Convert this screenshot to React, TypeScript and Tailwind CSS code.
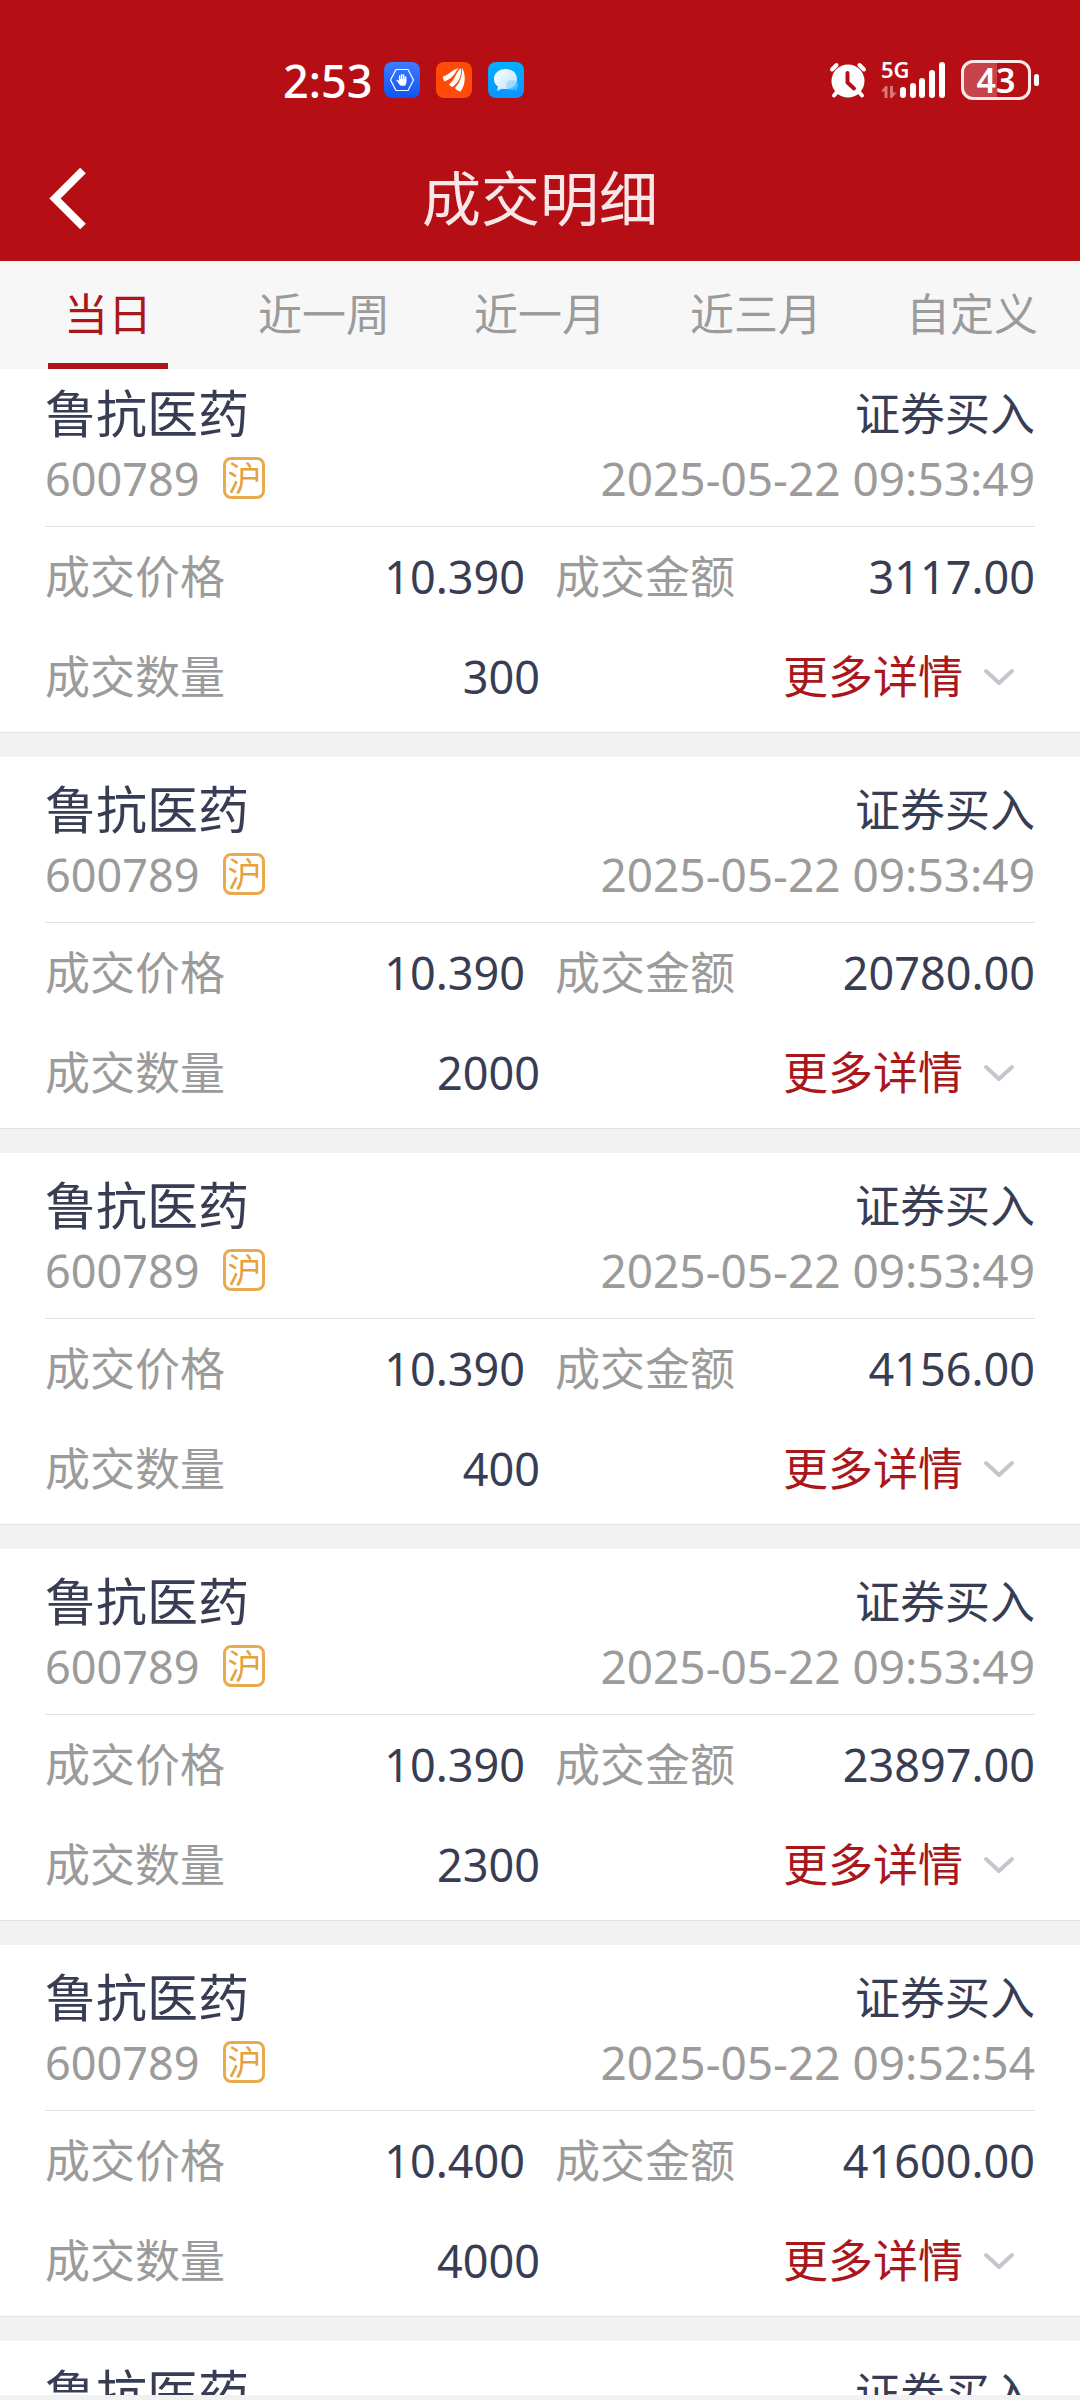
import { useState } from 'react';

interface DealDetail {
  code: string;
  market: string;
  time: string;
  price: string;
  amount: string;
  quantity: string;
}

interface Deal {
  id: number;
  name: string;
  side: string;
  detail?: DealDetail;
}

const stock = { name: '鲁抗医药', side: '证券买入' };
const listing = { code: '600789', market: '沪' };

const deals: Deal[] = [
  { ...stock, id: 1, detail: { ...listing, time: '2025-05-22 09:53:49', price: '10.390', amount: '3117.00', quantity: '300' } },
  { ...stock, id: 2, detail: { ...listing, time: '2025-05-22 09:53:49', price: '10.390', amount: '20780.00', quantity: '2000' } },
  { ...stock, id: 3, detail: { ...listing, time: '2025-05-22 09:53:49', price: '10.390', amount: '4156.00', quantity: '400' } },
  { ...stock, id: 4, detail: { ...listing, time: '2025-05-22 09:53:49', price: '10.390', amount: '23897.00', quantity: '2300' } },
  { ...stock, id: 5, detail: { ...listing, time: '2025-05-22 09:52:54', price: '10.400', amount: '41600.00', quantity: '4000' } },
  { ...stock, id: 6 },
];

const tabs = ['当日', '近一周', '近一月', '近三月', '自定义'];

function HandIcon() {
  return (
    <svg viewBox="0 0 36 36" className="size-9" aria-hidden="true">
      <defs>
        <linearGradient id="hand-bg" x1="0" y1="0" x2="0" y2="1">
          <stop offset="0" stopColor="#3f7bff" />
          <stop offset="1" stopColor="#0d55f5" />
        </linearGradient>
      </defs>
      <rect width="36" height="36" rx="8" fill="url(#hand-bg)" />
      <path d="M12 7.5h12L29.500 18 24 28.500H12L6.500 18z" fill="none" stroke="#fff" strokeWidth="1.200" strokeLinejoin="round" />
      <path
        d="M15.700 18.500v-4.500M17.700 18v-5.500M19.700 18v-5M21.600 19v-4M13.200 18.500l2.500 2.500"
        stroke="#fff"
        strokeWidth="1.500"
        strokeLinecap="round"
      />
      <path d="M15 17h7.300v3.500c0 1.500-.8 2.500-1.500 3.300h-4c-1-.8-2-1.800-2.500-2.800z" fill="#fff" />
    </svg>
  );
}

function WingIcon() {
  return (
    <svg viewBox="0 0 36 36" className="size-9" aria-hidden="true">
      <rect width="36" height="36" rx="8" fill="#ff4a08" />
      <path d="M7 14.500C13 13 16 7.500 23 6c-4 3-3.500 9-14.500 13.500C7.500 18 7 16.500 7 14.500z" fill="#fff" />
      <path d="M13 22.500C19 18 20.500 9 25 6c1 7-2 14-8.500 19-1.500-.5-2.800-1.300-3.500-2.500z" fill="#fff" />
      <path d="M19 26c4.500-5 7.500-11.500 7-20 4 6 3.800 17-1.500 23.500-2.500-.5-4.500-1.500-5.500-3.500z" fill="#fff" />
    </svg>
  );
}

function ChatIcon() {
  return (
    <svg viewBox="0 0 36 36" className="size-9" aria-hidden="true">
      <defs>
        <linearGradient id="chat-bg" x1="0" y1="0" x2="0" y2="1">
          <stop offset="0" stopColor="#04b0ff" />
          <stop offset="1" stopColor="#0a94ff" />
        </linearGradient>
        <linearGradient id="chat-bubble" x1="0" y1="0" x2="1" y2="1">
          <stop offset="0" stopColor="#fff" />
          <stop offset="1" stopColor="#b5e2ff" />
        </linearGradient>
      </defs>
      <rect width="36" height="36" rx="8" fill="url(#chat-bg)" />
      <path
        d="M17.500 7C10.500 7 6 11.500 6 17c0 3.500 1.500 6 4 7.500L9 29l5-2.300c1 .3 2.300.4 3.500.4C24 27.100 29 23 29 17S24.500 7 17.500 7z"
        fill="url(#chat-bubble)"
      />
      <path
        d="M24 18c-3.500 0-6 2-6 5s2.500 5 6 5l2.500-.5L29 29l-.5-2.500c1-.8 1.500-2 1.500-3.500 0-3-2.500-5-6-5z"
        fill="#7fd0ff"
        opacity=".6"
      />
    </svg>
  );
}

function AlarmIcon() {
  return (
    <svg viewBox="0 0 38 38" className="size-[38px]" aria-hidden="true">
      <g stroke="#fff" strokeLinecap="round" strokeWidth="4">
        <path d="M3 8.500 7.500 4M35 8.500 30.500 4M8 31l-3 3.500M30 31l3 3.500" />
      </g>
      <circle cx="19" cy="20" r="16.500" fill="#fff" />
      <path d="M18.500 12v9.500l6.500 6" fill="none" stroke="#b50f15" strokeWidth="4" strokeLinecap="round" strokeLinejoin="round" />
    </svg>
  );
}

function SignalIcon() {
  return (
    <svg viewBox="0 0 66 38" className="h-[38px] w-[66px]" aria-hidden="true">
      <g fill="#fff">
        <rect x="19" y="26" width="6" height="11" rx="3" />
        <rect x="29" y="22" width="6" height="15" rx="3" />
        <rect x="38" y="17" width="6" height="20" rx="3" />
        <rect x="48" y="9" width="6" height="28" rx="3" />
        <rect x="58" y="1" width="6" height="36" rx="3" />
      </g>
      <path d="M0 30.500 4.500 25h2v12h-3v-6.500zM9 25h3v6.500h3.500L11 37H9z" fill="#d9777b" />
    </svg>
  );
}

function Battery() {
  return (
    <div className="flex items-center gap-[3px]">
      <div className="flex h-10 w-[70px] items-center justify-center rounded-xl border-3 border-[#fbe9ea] bg-linear-to-r from-[#c6434b] from-52% to-[#b50f15] to-52% text-[34px] leading-none font-semibold">
        43
      </div>
      <div className="h-3 w-[5px] rounded-full bg-white" />
    </div>
  );
}

function StatusBar() {
  return (
    <div className="flex h-[136px] items-center justify-between pt-6 pr-[41px] pl-[283px]">
      <div className="flex items-center gap-4">
        <span className="-mr-1 text-[45px] leading-none font-medium">2:53</span>
        <HandIcon />
        <WingIcon />
        <ChatIcon />
      </div>
      <div className="flex items-center">
        <AlarmIcon />
        <div className="relative ml-[14px]">
          <SignalIcon />
          <span className="absolute -top-[6px] left-0 text-[22px] leading-7 font-semibold">5G</span>
        </div>
        <div className="ml-[14px]">
          <Battery />
        </div>
      </div>
    </div>
  );
}

function DealCard({ deal }: { deal: Deal }) {
  const { name, side, detail } = deal;

  return (
    <article className="border-b border-[#e2e2e2] bg-white px-[45px] pb-[5px]">
      <header className="pt-6">
        <div className="flex h-14 items-center justify-between">
          <h2 className="text-[51px] leading-none">{name}</h2>
          <span className="text-[45px] leading-none">{side}</span>
        </div>
        {detail && (
          <div className="flex h-[74px] items-center justify-between leading-none text-[#9b9b9b]">
            <div className="flex items-center gap-6 text-[45px]">
              <span>{detail.code}</span>
              <span className="flex size-[42px] items-center justify-center rounded-lg border-3 border-[#e8a94f] text-[34px] text-[#e6a03c]">
                {detail.market}
              </span>
            </div>
            <time className="text-[46px]">{detail.time}</time>
          </div>
        )}
      </header>
      {detail && (
        <>
          <dl className="mt-[11px] grid h-[100px] grid-cols-2 items-center gap-[30px] border-t border-[#e2e2e2] text-[45px] leading-none">
            <div className="flex justify-between">
              <dt className="text-[#9b9b9b]">成交价格</dt>
              <dd>{detail.price}</dd>
            </div>
            <div className="flex justify-between">
              <dt className="text-[#9b9b9b]">成交金额</dt>
              <dd>{detail.amount}</dd>
            </div>
          </dl>
          <div className="grid h-[101px] grid-cols-2 items-center text-[45px] leading-none">
            <dl className="flex justify-between">
              <dt className="text-[#9b9b9b]">成交数量</dt>
              <dd>{detail.quantity}</dd>
            </dl>
            <button type="button" className="flex items-center justify-end gap-5 pr-5 text-[#a9171b]">
              更多详情
              <svg viewBox="0 0 32 18" className="h-[18px] w-8" fill="none" aria-hidden="true">
                <path d="M3 3l13 12L29 3" stroke="#c5c6cc" strokeWidth="4" strokeLinecap="round" strokeLinejoin="round" />
              </svg>
            </button>
          </div>
        </>
      )}
    </article>
  );
}

export default function App() {
  const [active, setActive] = useState(0);

  return (
    <div className="flex h-screen flex-col overflow-hidden bg-[#f1f1f1] pb-[5px] font-['Noto_Sans','Noto_Sans_CJK_SC',sans-serif] text-[#383d54]">
      <div className="shrink-0 bg-[#b50f15] text-white">
        <StatusBar />
        <div className="grid h-[125px] grid-cols-[1fr_auto_1fr] items-center px-12">
          <button type="button" aria-label="返回" className="justify-self-start">
            <svg viewBox="0 0 40 64" className="h-16 w-10" fill="none" aria-hidden="true">
              <path d="M35 3.500L7 31.500l28 28" stroke="#fff" strokeWidth="8" />
            </svg>
          </button>
          <h1 className="text-[59px] leading-none text-[#f8e7e8]">成交明细</h1>
        </div>
      </div>

      <div role="tablist" className="relative z-10 grid h-[108px] shrink-0 grid-cols-5 bg-[#f7f7f7]">
        {tabs.map((tab, i) => (
          <button
            key={tab}
            type="button"
            role="tab"
            aria-selected={i === active}
            onClick={() => setActive(i)}
            className={`flex flex-col items-center justify-between text-[44px] leading-none ${
              i === active ? 'text-[#a9171b]' : 'text-[#9b9b9b]'
            }`}
          >
            <span className="flex flex-1 items-center pt-1">{tab}</span>
            <span className={`h-1.5 w-[120px] ${i === active ? 'bg-[#b0141a]' : ''}`} />
          </button>
        ))}
      </div>

      {/* the list is scrolled a little way under the tab bar */}
      <main className="-mt-2 flex min-h-0 flex-1 flex-col gap-6 overflow-hidden *:shrink-0 *:last:grow">
        {deals.map((deal) => (
          <DealCard key={deal.id} deal={deal} />
        ))}
      </main>
    </div>
  );
}
